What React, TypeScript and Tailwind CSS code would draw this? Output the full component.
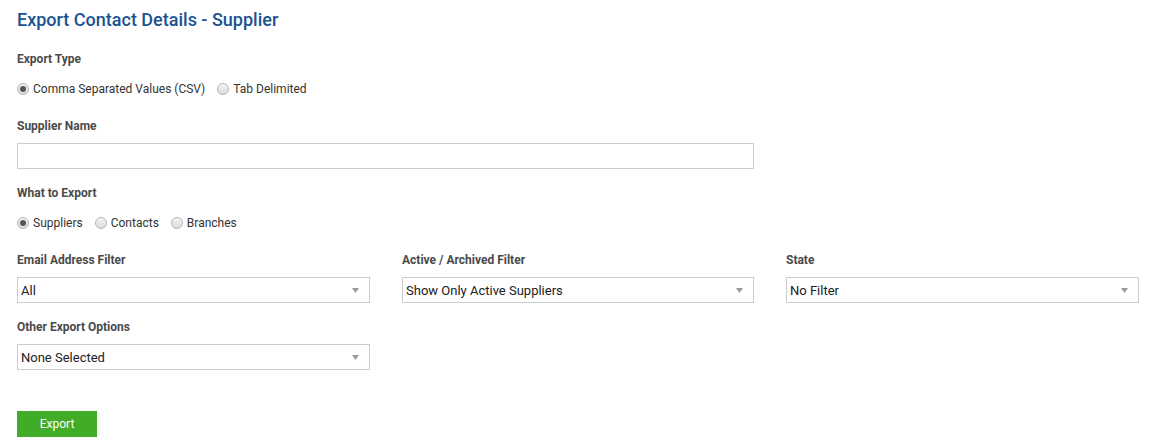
import React from "react";

const Radio = ({ checked, label }: { checked?: boolean; label: string }) => (
  <label className="flex items-center gap-[4px]">
    <span className="w-[12px] h-[12px] rounded-full border border-[#b5b5b5] bg-gradient-to-b from-[#f4f4f4] to-[#dcdcdc] flex items-center justify-center">
      {checked && <span className="w-[6px] h-[6px] rounded-full bg-[#555]" />}
    </span>
    <span>{label}</span>
  </label>
);

const Select = ({ value }: { value: string }) => (
  <div className="h-[26px] border border-[#cccccc] bg-white flex items-center justify-between pl-[3px] pr-[10px] pt-[1px] text-[13px] text-[#222]">
    <span>{value}</span>
    <svg width="7" height="5" viewBox="0 0 7 5" className="-mt-[1px]">
      <path d="M0 0 L7 0 L3.5 5 Z" fill="#9a9a9a" />
    </svg>
  </div>
);

const Label = ({ children, className = "" }: { children: React.ReactNode; className?: string }) => (
  <div className={"text-[12px] leading-[16px] font-bold text-[#4a4a4a] " + className}>{children}</div>
);

export default function App() {
  return (
    <div className="w-[1150px] h-[448px] bg-white pl-[17px] pr-[12px] font-['Roboto',sans-serif] overflow-hidden">
      <h1 className="mt-[8px] text-[18px] leading-[24px] font-medium text-[#1b5391]">
        Export Contact Details - Supplier
      </h1>
      <Label className="mt-[19px]">Export Type</Label>
      <div className="mt-[14px] flex items-center gap-[12px] text-[12px] leading-[16px] text-[#333]">
        <Radio checked label="Comma Separated Values (CSV)" />
        <Radio label="Tab Delimited" />
      </div>
      <Label className="mt-[21px]">Supplier Name</Label>
      <div className="mt-[9px] w-[737px] h-[26px] border border-[#cccccc]" />
      <Label className="mt-[16px]">What to Export</Label>
      <div className="mt-[14px] flex items-center gap-[12px] text-[12px] leading-[16px] text-[#333]">
        <Radio checked label="Suppliers" />
        <Radio label="Contacts" />
        <Radio label="Branches" />
      </div>
      <div className="mt-[21px] grid grid-cols-[353px_352px_353px] gap-x-[32px]">
        <div>
          <Label>Email Address Filter</Label>
          <div className="mt-[9px]"><Select value="All" /></div>
        </div>
        <div>
          <Label>Active / Archived Filter</Label>
          <div className="mt-[9px]"><Select value="Show Only Active Suppliers" /></div>
        </div>
        <div>
          <Label>State</Label>
          <div className="mt-[9px]"><Select value="No Filter" /></div>
        </div>
      </div>
      <Label className="mt-[16px]">Other Export Options</Label>
      <div className="mt-[9px] w-[353px]"><Select value="None Selected" /></div>
      <button className="mt-[41px] w-[80px] h-[26px] bg-[#41ac27] text-white text-[12px] flex items-center justify-center">
        Export
      </button>
    </div>
  );
}
